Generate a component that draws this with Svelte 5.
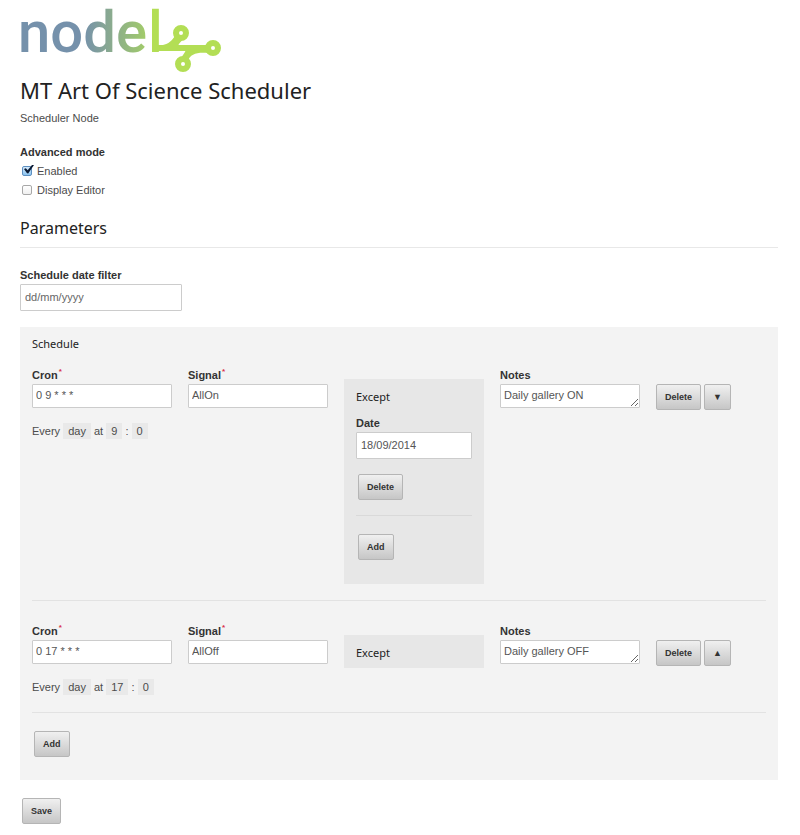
<script lang="ts">
  interface ScheduleEntry {
    id: number;
    cron: string;
    signal: string;
    hour: string;
    minute: string;
    except: string[];
    notes: string;
  }

  let enabled = $state(true);
  let displayEditor = $state(false);
  let dateFilter = $state('');
  let nextId = 3;

  let entries = $state<ScheduleEntry[]>([
    { id: 1, cron: '0 9 * * *', signal: 'AllOn', hour: '9', minute: '0', except: ['18/09/2014'], notes: 'Daily gallery ON' },
    { id: 2, cron: '0 17 * * *', signal: 'AllOff', hour: '17', minute: '0', except: [], notes: 'Daily gallery OFF' },
  ]);

  function addEntry() {
    entries.push({ id: nextId++, cron: '', signal: '', hour: '0', minute: '0', except: [], notes: '' });
  }

  function removeEntry(index: number) {
    entries.splice(index, 1);
  }

  function swap(index: number, other: number) {
    const moved = entries[index];
    entries[index] = entries[other];
    entries[other] = moved;
  }
</script>

<main>
  <svg class="logo" width="204" height="66" viewBox="0 0 204 66" role="img" aria-label="nodel">
    <defs>
      <linearGradient id="fade" gradientUnits="userSpaceOnUse" x1="0" y1="0" x2="140" y2="0">
        <stop offset="0.45" stop-color="#7591ab" />
        <stop offset="0.6" stop-color="#85a496" />
        <stop offset="0.85" stop-color="#9cc472" />
        <stop offset="1" stop-color="#b1dc57" />
      </linearGradient>
    </defs>
    <text class="wordmark" x="-2" y="44" fill="url(#fade)">node</text>
    <text class="wordmark" x="128" y="44" fill="#b3de55">l</text>
    <g fill="#b3de55">
      <path d="M133 37H190V43H133Z" />
      <path d="M138 38C147 37 151 34 155 28L163 31C161 34 159 35 158 38Z" />
      <path d="M160 52C162 48 164 46 166 42L188 41V45C177 44 170 46 168 53Z" />
    </g>
    <g fill="#fff" stroke="#b3de55" stroke-width="6">
      <circle cx="161" cy="25" r="5" />
      <circle cx="193" cy="40" r="5" />
      <circle cx="163" cy="56" r="5" />
    </g>
  </svg>

  <h1>MT Art Of Science Scheduler</h1>
  <p class="subtitle">Scheduler Node</p>

  <fieldset class="modes">
    <legend>Advanced mode</legend>
    <label><input type="checkbox" bind:checked={enabled} />Enabled</label>
    <label><input type="checkbox" bind:checked={displayEditor} />Display Editor</label>
  </fieldset>

  <h2>Parameters</h2>

  <div class="field filter">
    <label for="date-filter">Schedule date filter</label>
    <input id="date-filter" class="date" type="text" placeholder="dd/mm/yyyy" bind:value={dateFilter} />
  </div>

  <section class="schedule">
    <h3>Schedule</h3>

    {#each entries as entry, i (entry.id)}
      <div class="entry">
        <div>
          <div class="field">
            <label for="cron-{entry.id}">Cron<sup>*</sup></label>
            <input id="cron-{entry.id}" type="text" required bind:value={entry.cron} />
          </div>
          <p class="summary">
            Every <span>day</span> at <span>{entry.hour}</span> : <span>{entry.minute}</span>
          </p>
        </div>

        <div class="field">
          <label for="signal-{entry.id}">Signal<sup>*</sup></label>
          <input id="signal-{entry.id}" type="text" required bind:value={entry.signal} />
        </div>

        <div class="except">
          <h4>Except</h4>
          {#if entry.except.length > 0}
            {#each entry.except as _, j}
              <div class="exception">
                <div class="field">
                  <label for="except-{entry.id}-{j}">Date</label>
                  <input id="except-{entry.id}-{j}" class="date" type="text" bind:value={entry.except[j]} />
                </div>
                <button type="button" onclick={() => entry.except.splice(j, 1)}>Delete</button>
              </div>
            {/each}
            <button type="button" class="add" onclick={() => entry.except.push('')}>Add</button>
          {/if}
        </div>

        <div class="field">
          <label for="notes-{entry.id}">Notes</label>
          <textarea id="notes-{entry.id}" rows="1" bind:value={entry.notes}></textarea>
        </div>

        <div class="actions">
          <button type="button" onclick={() => removeEntry(i)}>Delete</button>
          {#if i < entries.length - 1}
            <button type="button" aria-label="Move down" onclick={() => swap(i, i + 1)}>▼</button>
          {:else if i > 0}
            <button type="button" aria-label="Move up" onclick={() => swap(i, i - 1)}>▲</button>
          {/if}
        </div>
      </div>
    {/each}

    <button type="button" class="add" onclick={addEntry}>Add</button>
  </section>

  <button type="submit" class="save">Save</button>
</main>

<style>
  :global(body) {
    margin: 0;
    background: #fff;
  }

  main {
    box-sizing: border-box;
    padding: 8px 22px 12px 20px;
    font: 11px/16px 'Liberation Sans', Arial, sans-serif;
    color: #4b4b4b;
  }

  .logo {
    display: block;
    overflow: visible;
  }

  .wordmark {
    font: 500 58px Roboto, sans-serif;
  }

  h1,
  h2,
  h3,
  h4 {
    margin: 0;
    font-family: 'Noto Sans', sans-serif;
    font-weight: 400;
    color: #222;
  }

  h1 {
    font-size: 22px;
    line-height: 32px;
  }

  h2 {
    margin-top: 17px;
    padding-bottom: 7px;
    border-bottom: 1px solid #e8e8e8;
    font-size: 16px;
    line-height: 24px;
  }

  h3,
  h4 {
    font-size: 11px;
    line-height: 16px;
  }

  p {
    margin: 0;
  }

  .subtitle {
    margin-top: 4px;
  }

  .modes {
    margin: 18px 0 0;
    padding: 0;
    border: 0;
  }

  .modes legend {
    padding: 0 0 1px;
    font-weight: 700;
    color: #333;
  }

  .modes label {
    display: flex;
    align-items: center;
    gap: 5px;
    height: 19px;
  }

  input[type='checkbox'] {
    appearance: none;
    position: relative;
    box-sizing: border-box;
    width: 10px;
    height: 10px;
    margin: 0 0 0 2px;
    border: 1px solid #a8a8a8;
    border-radius: 2px;
    background: linear-gradient(#fff, #f0f0f0);
  }

  input[type='checkbox']:checked {
    border-color: #5d8fc0;
    background: linear-gradient(#d5eafc, #8cc4f0);
  }

  input[type='checkbox']:checked::after {
    content: '';
    position: absolute;
    top: -2px;
    left: 1px;
    width: 10px;
    height: 9px;
    background: #0b1a33;
    clip-path: polygon(0 50%, 18% 42%, 37% 65%, 84% 0, 100% 5%, 42% 100%, 30% 98%);
  }

  .field {
    display: flex;
    flex-direction: column;
    gap: 1px;
  }

  .field label {
    height: 16px;
    font-weight: 700;
    color: #333;
  }

  sup {
    margin-left: 1px;
    font-size: 8px;
    line-height: 0;
    color: #d8304a;
  }

  .field input,
  .field textarea {
    box-sizing: border-box;
    width: 100%;
    height: 24px;
    margin: 0;
    padding: 2px 3px 4px;
    border: 1px solid #ccc;
    border-radius: 1px;
    background: #fff;
    font: inherit;
    color: #555;
  }

  .field textarea {
    display: block;
    min-height: 24px;
    overflow: hidden;
    resize: vertical;
  }

  .field .date {
    height: 27px;
    padding: 3px 4px 5px;
  }

  .field input::placeholder {
    color: #666;
    opacity: 1;
  }

  .filter {
    width: 162px;
    margin-top: 19px;
  }

  .schedule {
    margin-top: 16px;
    padding: 9px 12px 23px;
    background: #f3f3f3;
  }

  .entry {
    display: grid;
    grid-template-columns: repeat(4, minmax(0, 14fr)) minmax(76px, 11fr);
    column-gap: 16px;
    align-items: start;
    margin-bottom: 18px;
    padding: 15px 0 16px;
    border-bottom: 1px solid #e2e2e2;
  }

  .entry + .entry {
    margin-top: 22px;
    padding-top: 0;
  }

  .summary {
    margin: 15px 0 1px;
    white-space: nowrap;
  }

  .summary span {
    display: inline-block;
    padding: 0 5px;
    background: #e9e9e9;
  }

  .except {
    margin-top: 12px;
    padding: 10px 12px 7px;
    background: #e7e7e7;
  }

  .exception {
    margin: 10px 0 18px;
    padding-bottom: 15px;
    border-bottom: 1px solid #d9d9d9;
  }

  .exception button {
    margin: 15px 2px 0;
  }

  .except .add {
    margin-bottom: 17px;
  }

  .add,
  .save {
    margin: 0 2px;
  }

  button {
    height: 26px;
    padding: 0 8px;
    border: 1px solid #b5b5b5;
    border-radius: 2px;
    background: linear-gradient(#f0f0f0, #c6c6c6);
    font: 700 9px 'Liberation Sans', Arial, sans-serif;
    color: #333;
  }

  .save {
    margin-top: 18px;
  }

  .actions {
    display: flex;
    gap: 3px;
    margin-top: 17px;
  }
</style>
